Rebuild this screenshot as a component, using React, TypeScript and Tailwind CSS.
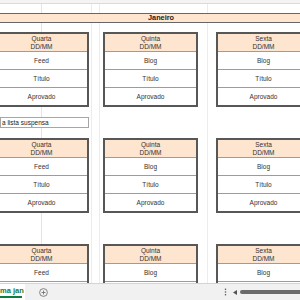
import React from "react";

type Day = { name: string; kind: string };

const days: Day[] = [
  { name: "Quarta", kind: "Feed" },
  { name: "Quinta", kind: "Blog" },
  { name: "Sexta", kind: "Blog" },
];

const offsets = ["ml-[-6px]", "ml-[14px]", "ml-[18px]"];

function PostCard({ day, offset, rows }: { day: Day; offset: string; rows: string[] }) {
  return (
    <div className={`${offset} flex w-[95px] shrink-0 flex-col border-2 border-[#575757] bg-white`}>
      <div className="flex h-[17px] flex-col items-center justify-center bg-[#fde5d0] leading-[8px]">
        <span>{day.name}</span>
        <span>DD/MM</span>
      </div>
      {rows.map((row, i) => (
        <div
          key={i}
          className="flex h-[18px] items-center justify-center border-t border-[#9c9c9c]"
        >
          {row === "kind" ? day.kind : row}
        </div>
      ))}
    </div>
  );
}

function WeekRow({ rows }: { rows: string[] }) {
  return (
    <div className="flex shrink-0">
      {days.map((day, i) => (
        <PostCard key={day.name} day={day} offset={offsets[i]} rows={rows} />
      ))}
    </div>
  );
}

export default function App() {
  const fullRows = ["kind", "Título", "Aprovado"];
  // last week is scrolled under the sheet tabs, only the first row shows
  const cutRows = ["kind", ""];

  return (
    <div className="flex h-[300px] w-[300px] flex-col overflow-hidden bg-white font-['Liberation_Sans',Arial,sans-serif] text-[6.5px] text-[#333333]">
      <div className="flex min-h-0 flex-1 flex-col overflow-hidden bg-[linear-gradient(to_right,transparent_41px,#e4e4e4_41px_42px,transparent_42px_91px,#ececec_91px_92px,transparent_92px_99px,#ececec_99px_100px,transparent_100px_207px,#ececec_207px_208px,transparent_208px)]">
        <div className="h-[4px] shrink-0 border-b border-[#dadada] bg-[#f4f4f4]" />
        <div className="h-[9px] shrink-0" />
        <div className="flex h-[10px] shrink-0 items-center justify-center border-y border-[#666666] bg-[#fde5d0] pl-[22px] text-[7.3px] font-bold text-[#222222]">
          Janeiro
        </div>
        <div className="h-[9px] shrink-0" />
        <WeekRow rows={fullRows} />
        <div className="h-[10px] shrink-0" />
        <div className="flex h-[11px] w-[89px] shrink-0 items-center border border-[#a6a6a6] bg-white pl-[1px] text-[#222222]">
          a lista suspensa
        </div>
        <div className="h-[10px] shrink-0" />
        <WeekRow rows={fullRows} />
        <div className="h-[31px] shrink-0" />
        <WeekRow rows={cutRows} />
      </div>

      <div className="flex h-[17px] shrink-0 items-center border-t border-[#d4d4d4] bg-[#f1f1f1]">
        <div className="flex h-full w-[25px] flex-col justify-center bg-white">
          <span className="mt-[1px] text-[7.5px] font-bold leading-[8px] text-[#107c41]">ma jan</span>
          <div className="mt-[1px] h-[2px] w-[22px] bg-[#107c41]" />
        </div>
        <svg className="ml-[14px]" width="9" height="9" viewBox="0 0 9 9" fill="none" stroke="#6a6a6a" strokeWidth="0.8">
          <circle cx="4.5" cy="4.5" r="3.9" />
          <path d="M4.5 2.5v4M2.5 4.5h4" />
        </svg>
        <div className="ml-auto flex items-center">
          <svg width="3" height="8" viewBox="0 0 3 8" fill="#555555">
            <circle cx="1.5" cy="1.2" r="0.8" />
            <circle cx="1.5" cy="4" r="0.8" />
            <circle cx="1.5" cy="6.8" r="0.8" />
          </svg>
          <svg className="ml-[6px]" width="4" height="5" viewBox="0 0 4 5" fill="#555555">
            <path d="M4 0v5L0 2.5z" />
          </svg>
          <div className="ml-[3px] h-[4px] w-[60px] rounded-l-full bg-[#6b6b6b]" />
        </div>
      </div>
    </div>
  );
}
